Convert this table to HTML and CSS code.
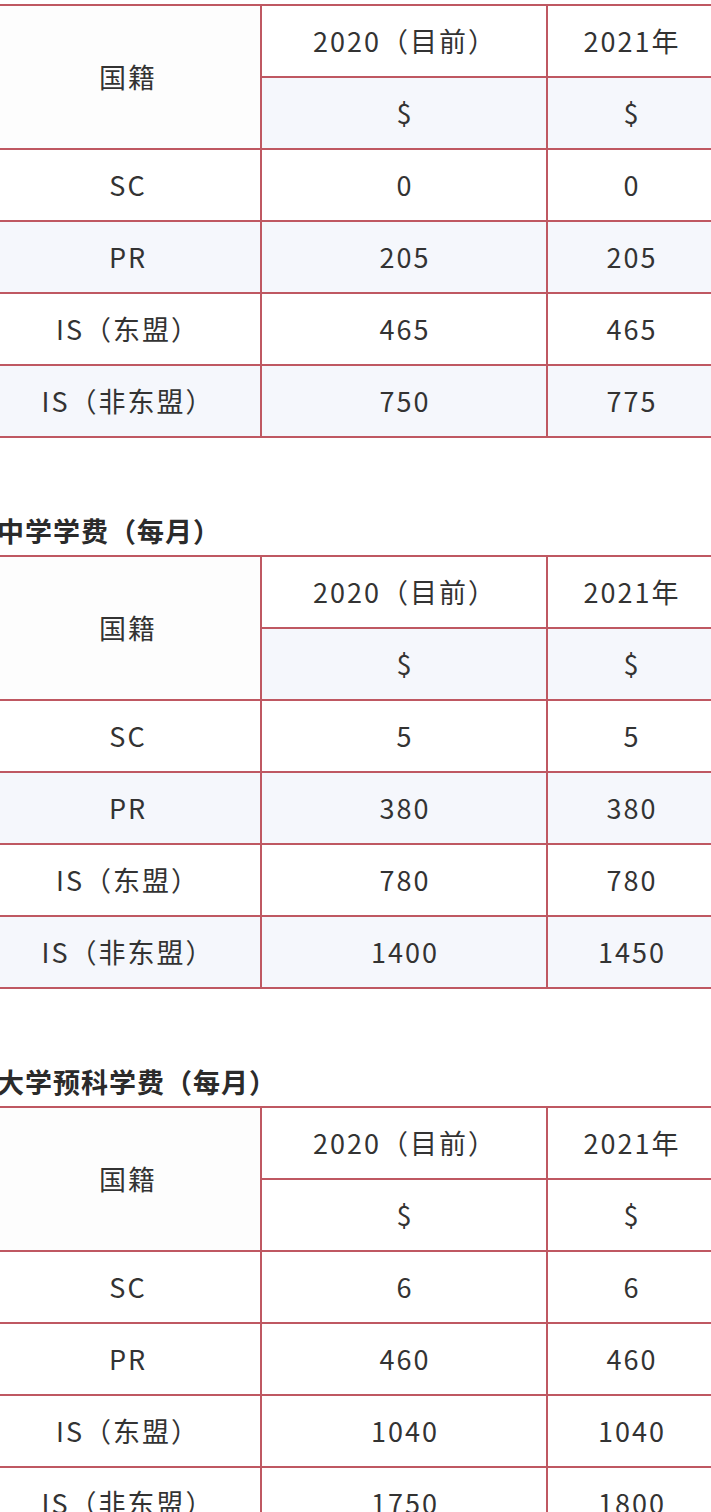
FILE: index.html
```html
<!DOCTYPE html>
<html lang="zh">
<head>
<meta charset="utf-8">
<link rel="stylesheet" href="styles.css">
</head>
<body>
<div class="page">
  <table class="fee striped">
    <colgroup><col class="c1"><col class="c2"><col class="c3"></colgroup>
    <tr><td rowspan="2" class="nat">国籍</td><td>2020（目前）</td><td>2021年</td></tr>
    <tr class="alt"><td>$</td><td>$</td></tr>
    <tr><td>SC</td><td>0</td><td>0</td></tr>
    <tr class="alt"><td>PR</td><td>205</td><td>205</td></tr>
    <tr><td>IS（东盟）</td><td>465</td><td>465</td></tr>
    <tr class="alt"><td>IS（非东盟）</td><td>750</td><td>775</td></tr>
  </table>

  <h2 class="title">中学学费（每月）</h2>
  <table class="fee striped">
    <colgroup><col class="c1"><col class="c2"><col class="c3"></colgroup>
    <tr><td rowspan="2" class="nat">国籍</td><td>2020（目前）</td><td>2021年</td></tr>
    <tr class="alt"><td>$</td><td>$</td></tr>
    <tr><td>SC</td><td>5</td><td>5</td></tr>
    <tr class="alt"><td>PR</td><td>380</td><td>380</td></tr>
    <tr><td>IS（东盟）</td><td>780</td><td>780</td></tr>
    <tr class="alt"><td>IS（非东盟）</td><td>1400</td><td>1450</td></tr>
  </table>

  <h2 class="title">大学预科学费（每月）</h2>
  <table class="fee">
    <colgroup><col class="c1"><col class="c2"><col class="c3"></colgroup>
    <tr><td rowspan="2" class="nat">国籍</td><td>2020（目前）</td><td>2021年</td></tr>
    <tr><td>$</td><td>$</td></tr>
    <tr><td>SC</td><td>6</td><td>6</td></tr>
    <tr><td>PR</td><td>460</td><td>460</td></tr>
    <tr><td>IS（东盟）</td><td>1040</td><td>1040</td></tr>
    <tr><td>IS（非东盟）</td><td>1750</td><td>1800</td></tr>
  </table>
</div>
</body>
</html>
```
FILE: styles.css
```css
html, body {
  margin: 0;
  padding: 0;
  background: #ffffff;
  overflow: hidden;
}
body {
  font-family: "Noto Sans CJK SC", "Noto Sans", sans-serif;
  color: #333333;
}
.page {
  margin-left: -8px;
  padding-top: 4px;
  width: 730px;
}
.fee {
  border-collapse: collapse;
  table-layout: fixed;
  width: 722px;
  font-size: 27px;
  letter-spacing: 2px;
  margin-bottom: 75px;
}
.c1 { width: 268px; }
.c2 { width: 286px; }
.c3 { width: 168px; }
.fee td {
  border: 2px solid #bf5862;
  height: 70px;
  padding: 0 0 0 2px;
  text-align: center;
  vertical-align: middle;
  line-height: 36px;
}
.fee .nat { background: #fdfdfd; }
.striped .alt td { background: #f5f7fc; }
.title {
  margin: 0 0 6px 5px;
  font-size: 27px;
  letter-spacing: 1px;
  line-height: 36px;
  font-weight: 600;
  color: #2b2b2b;
}
```
